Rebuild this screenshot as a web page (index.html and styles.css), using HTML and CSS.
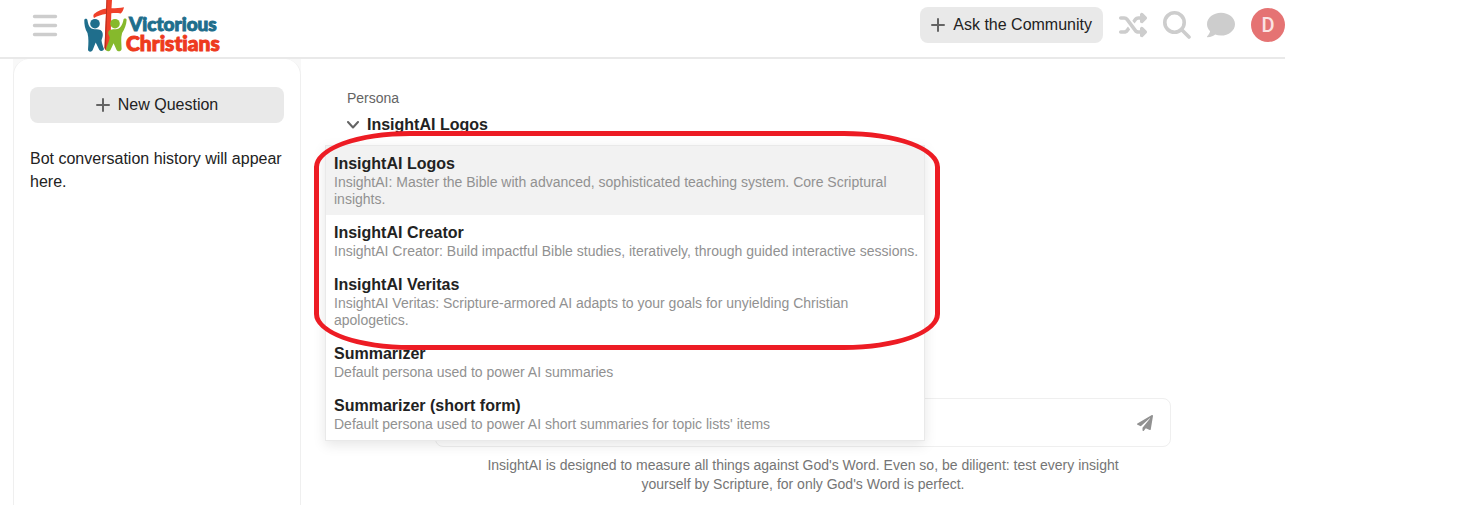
FILE: index.html
```
<!DOCTYPE html>
<html lang="en">
<head>
    <meta charset="UTF-8">
    <meta name="viewport" content="width=device-width, initial-scale=1.0">
    <title>Victorious Christians - InsightAI</title>
    <link rel="stylesheet" href="styles.css">
</head>
<body>
    <div class="app">
        <header class="header">
            <button class="icon-btn menu-btn" type="button" aria-label="Menu">
                <svg width="26" height="24" viewBox="0 0 26 24" fill="none" stroke="currentColor" stroke-width="3.4" stroke-linecap="round">
                    <path d="M2.500 3.500h21M2.500 12.500h21M2.500 21.500h21"/>
                </svg>
            </button>
            <a class="logo" href="#" aria-label="Victorious Christians">
                <svg width="140" height="58" viewBox="0 0 140 58">
                    <!-- cross -->
                    <path fill="#f0412a" d="M22.500 0h5.500l-.5 8.200c4.500 0 8.500-.3 12.500-1-.5 2.400-1.500 4.900-3.300 6.400-3-.6-6-.6-9.400-.3L26.500 42c-.8 3.500-2.500 6-4.500 8.500l-1.500-2.500 1.500-33.900c-4.300.6-8.500 1.800-12 3.800-.8-1-.9-2.900 0-3.900C13.500 11 17.500 9.400 22.200 8.600z"/>
                    <path fill="#b92d1d" d="M22.500 0h.8l-1.300 50.200-1.500-2.200z"/>
                    <!-- people -->
                    <circle fill="#1f6e8c" cx="11" cy="23.700" r="4.800"/>
                    <path fill="#1f6e8c" d="M.3 20c.2-1.600 2.800-1.800 3.100 0 .6 3.600 1.300 6.800 4.100 8.600 2 1 4.500.6 7 .9 3 .4 4.500 2.500 4.300 5.500-.1 2-.8 3.500-1.300 5.300.3 3.200 1.500 6.200 2.500 8.700-.5 2.200-3.500 2.700-4.800.8l-3.500-7.300-3 7.500c-1 2.400-4.700 2.100-4.700-.5.500-6.500.8-11-.5-16.500C1 29 .2 24.500.3 20z"/>
                    <circle fill="#86b92c" cx="31" cy="23.700" r="4.800"/>
                    <path fill="#86b92c" d="M39.500 19.500c.4-1.600 3.100-1.400 3.100.4-.2 5-2 8.800-4.500 13.100-1.600 5.500-.5 10.500-.5 16-.2 2.600-4 3.200-5 1l-3-6.800-3 6.500c-1.200 2.400-5.200 1.900-4.600-.7 1-4 3.400-7.500 3.700-11.500-.5-2-2-3.500-1.400-5.500.8-2.500 4-2.800 7.200-2.800 5 0 7-4.500 8-9.700z"/>
                    <text class="logo-top" x="45" y="31">Victorious</text>
                    <text class="logo-bottom" x="42" y="51">Christians</text>
                </svg>
            </a>
            <nav class="header-actions">
                <button class="btn" type="button">
                    <svg width="14" height="14" viewBox="0 0 14 14" fill="none" stroke="#646464" stroke-width="2" stroke-linecap="round"><path d="M7 1v12M1 7h12"/></svg>
                    Ask the Community
                </button>
                <button class="icon-btn" type="button" aria-label="Random">
                    <svg width="28" height="28" viewBox="0 0 512 512" fill="currentColor"><path d="M403.800 34.400c12-5 25.700-2.200 34.900 6.900l64 64c6 6 9.400 14.100 9.400 22.600s-3.400 16.600-9.400 22.600l-64 64c-9.200 9.200-22.900 11.900-34.900 6.900s-19.800-16.600-19.800-29.600V160H352c-10.100 0-19.600 4.700-25.600 12.800L284 229.300 244 176l31.200-41.600C293.300 110.200 321.800 96 352 96h32V64c0-12.900 7.800-24.600 19.800-29.600zM164 282.700L204 336l-31.200 41.600C154.700 401.800 126.200 416 96 416H32c-17.700 0-32-14.300-32-32s14.300-32 32-32H96c10.100 0 19.600-4.700 25.600-12.800L164 282.700zm274.600 188c-9.200 9.200-22.900 11.900-34.900 6.900s-19.800-16.600-19.800-29.600V416H352c-30.200 0-58.700-14.200-76.800-38.400L121.600 172.800c-6-8.100-15.500-12.800-25.600-12.800H32c-17.700 0-32-14.300-32-32s14.300-32 32-32H96c30.200 0 58.700 14.200 76.800 38.400L326.400 339.200c6 8.100 15.500 12.800 25.600 12.800h32V320c0-12.900 7.800-24.600 19.800-29.600s25.700-2.200 34.900 6.900l64 64c6 6 9.400 14.100 9.400 22.600s-3.400 16.600-9.400 22.600l-64 64z"/></svg>
                </button>
                <button class="icon-btn" type="button" aria-label="Search">
                    <svg width="28" height="28" viewBox="0 0 28 28" fill="none" stroke="currentColor" stroke-width="3.600" stroke-linecap="round"><circle cx="11.500" cy="11.500" r="9.700"/><path d="M18.700 18.700l7.300 7.300"/></svg>
                </button>
                <button class="icon-btn" type="button" aria-label="Chat">
                    <svg width="28" height="28" viewBox="0 0 512 512" fill="currentColor"><path d="M256 32C114.600 32 0 125.100 0 240c0 49.600 21.400 95 57 130.700C44.500 421.100 2.700 466 2.200 466.500c-2.200 2.300-2.800 5.700-1.500 8.700S4.800 480 8 480c66.300 0 116-31.800 140.600-51.400 32.700 12.300 69 19.400 107.400 19.400 141.400 0 256-93.100 256-208S397.400 32 256 32z"/></svg>
                </button>
                <button class="avatar" type="button">D</button>
            </nav>
        </header>

        <div class="layout">
            <aside class="sidebar">
                <div class="sidebar-panel">
                    <button class="btn btn-block" type="button">
                        <svg width="14" height="14" viewBox="0 0 14 14" fill="none" stroke="#646464" stroke-width="2" stroke-linecap="round"><path d="M7 1v12M1 7h12"/></svg>
                        New Question
                    </button>
                    <p class="history">Bot conversation history will appear here.</p>
                </div>
            </aside>

            <main class="content">
                <div class="persona">
                    <span class="persona-label" id="persona-label">Persona</span>
                    <button class="persona-toggle" type="button" aria-haspopup="listbox" aria-expanded="true" aria-labelledby="persona-label persona-value">
                        <svg width="12" height="8" viewBox="0 0 12 8" fill="none" stroke="#646464" stroke-width="2" stroke-linecap="round" stroke-linejoin="round"><path d="M1 1l5 5.500L11 1"/></svg>
                        <span id="persona-value">InsightAI Logos</span>
                    </button>
                    <ul class="persona-menu" role="listbox" aria-labelledby="persona-label">
                        <li class="option selected" role="option" aria-selected="true">
                            <span class="option-name">InsightAI Logos</span>
                            <span class="option-desc">InsightAI: Master the Bible with advanced, sophisticated teaching system. Core Scriptural insights.</span>
                        </li>
                        <li class="option" role="option" aria-selected="false">
                            <span class="option-name">InsightAI Creator</span>
                            <span class="option-desc">InsightAI Creator: Build impactful Bible studies, iteratively, through guided interactive sessions.</span>
                        </li>
                        <li class="option" role="option" aria-selected="false">
                            <span class="option-name">InsightAI Veritas</span>
                            <span class="option-desc">InsightAI Veritas: Scripture-armored AI adapts to your goals for unyielding Christian apologetics.</span>
                        </li>
                        <li class="option" role="option" aria-selected="false">
                            <span class="option-name">Summarizer</span>
                            <span class="option-desc">Default persona used to power AI summaries</span>
                        </li>
                        <li class="option" role="option" aria-selected="false">
                            <span class="option-name">Summarizer (short form)</span>
                            <span class="option-desc">Default persona used to power AI short summaries for topic lists' items</span>
                        </li>
                    </ul>
                    <div class="highlight"></div>
                </div>

                <form class="composer">
                    <input class="composer-input" type="text" aria-label="Ask a question">
                    <button class="send" type="button" aria-label="Send">
                        <svg width="16" height="16" viewBox="0 0 512 512" fill="currentColor"><path d="M476 3.200L12.500 270.600c-18.100 10.400-15.800 35.600 2.200 43.200L121 358.400l287.300-253.200c5.500-4.900 13.300 2.600 8.600 8.300L176 407v80.500c0 23.600 28.500 32.900 42.500 15.800L282 426l124.600 52.200c14.200 6 30.400-2.900 33-18.200l72-432C515 7.800 493.300-6.800 476 3.200z"/></svg>
                    </button>
                </form>
                <p class="disclaimer">InsightAI is designed to measure all things against God's Word. Even so, be diligent: test every insight yourself by Scripture, for only God's Word is perfect.</p>
            </main>
        </div>
    </div>
</body>
</html>
```
FILE: styles.css
```
* {
    box-sizing: border-box;
}
body {
    margin: 0;
    background: #fff;
    color: #222;
    font-family: Arial, "Liberation Sans", sans-serif;
    font-size: 16px;
}
button {
    font: inherit;
    color: inherit;
    border: none;
    padding: 0;
    cursor: pointer;
}
svg {
    display: block;
    flex: none;
}
.app {
    display: flex;
    flex-direction: column;
    max-width: 1285px;
    min-height: 100vh;
}

/* header */
.header {
    display: flex;
    align-items: flex-start;
    padding-left: 32px;
    height: 59px;
    border-bottom: 2px solid #e9e9e9;
}
.header-actions {
    display: flex;
    align-items: center;
    gap: 16px;
    height: 50px;
    margin-left: auto;
}
.icon-btn {
    background: none;
    color: #cdcdcd;
}
.menu-btn {
    display: flex;
    align-items: center;
    height: 50px;
}
.logo {
    margin-left: 26px;
}
.logo-top,
.logo-bottom {
    font-family: Lato, "Liberation Sans", sans-serif;
    font-weight: 900;
    font-variant-ligatures: none;
}
.logo-top {
    font-size: 19px;
    fill: #1f6e8c;
    stroke: #1f6e8c;
}
.logo-bottom {
    font-size: 21px;
    fill: #ee3a1d;
    stroke: #ee3a1d;
}
.btn {
    display: flex;
    align-items: center;
    justify-content: center;
    gap: 8px;
    height: 36px;
    padding: 0 11px;
    border-radius: 8px;
    background: #e9e9e9;
}
.btn-block {
    width: 100%;
}
.avatar {
    width: 34px;
    height: 34px;
    border-radius: 50%;
    background: #e57373;
    color: #fbe3e3;
    font-family: Roboto, sans-serif;
    font-weight: 500;
    font-size: 20px;
}

/* sidebar */
.layout {
    display: flex;
    flex: 1;
}
.sidebar {
    display: flex;
    width: 288px;
    margin-left: 13px;
    background: #f8f8f8;
}
.sidebar-panel {
    flex: 1;
    padding: 28px 16px;
    border: 1px solid #efefef;
    border-width: 0 1px;
    border-radius: 16px 16px 0 0;
    background: #fff;
}
.history {
    margin: 24px 0 0;
    line-height: 23px;
}

/* persona selector */
.content {
    display: flex;
    flex: 1;
    flex-direction: column;
    padding: 31px 0 0 20px;
}
.persona {
    position: relative;
    height: 308px;
    padding-left: 26px;
}
.persona-label {
    display: block;
    font-size: 14px;
    line-height: 17px;
    color: #646464;
}
.persona-toggle {
    display: flex;
    align-items: center;
    gap: 8px;
    margin-top: 9px;
    background: none;
    font-weight: bold;
}
.persona-menu {
    position: absolute;
    top: 55px;
    left: 4px;
    width: 600px;
    margin: 0;
    padding: 0;
    list-style: none;
    background: #fff;
    border: 1px solid #e9e9e9;
    box-shadow: 0 4px 12px rgba(0, 0, 0, 0.1);
}
.option {
    padding: 8px 4px 7px 8px;
}
.option.selected {
    background: #f2f2f2;
}
.option-name {
    display: block;
    line-height: 20px;
    font-weight: bold;
}
.option-desc {
    display: block;
    font-size: 14px;
    line-height: 17px;
    color: #919191;
}
.highlight {
    position: absolute;
    top: 41px;
    left: -7px;
    width: 626px;
    height: 219px;
    border: 5px solid #ed1c24;
    border-radius: 96px / 36px;
    pointer-events: none;
}

/* composer */
.composer {
    display: flex;
    align-items: center;
    align-self: center;
    width: 100%;
    max-width: 736px;
    height: 49px;
    padding: 0 17px;
    border: 1px solid #efefef;
    border-radius: 8px;
}
.composer-input {
    flex: 1;
    border: none;
    outline: none;
    font: inherit;
    background: none;
}
.send {
    background: none;
    color: #919191;
}
.disclaimer {
    align-self: center;
    max-width: 640px;
    margin: 9px 0 0;
    font-size: 14px;
    line-height: 19px;
    text-align: center;
    color: #757575;
}
```
